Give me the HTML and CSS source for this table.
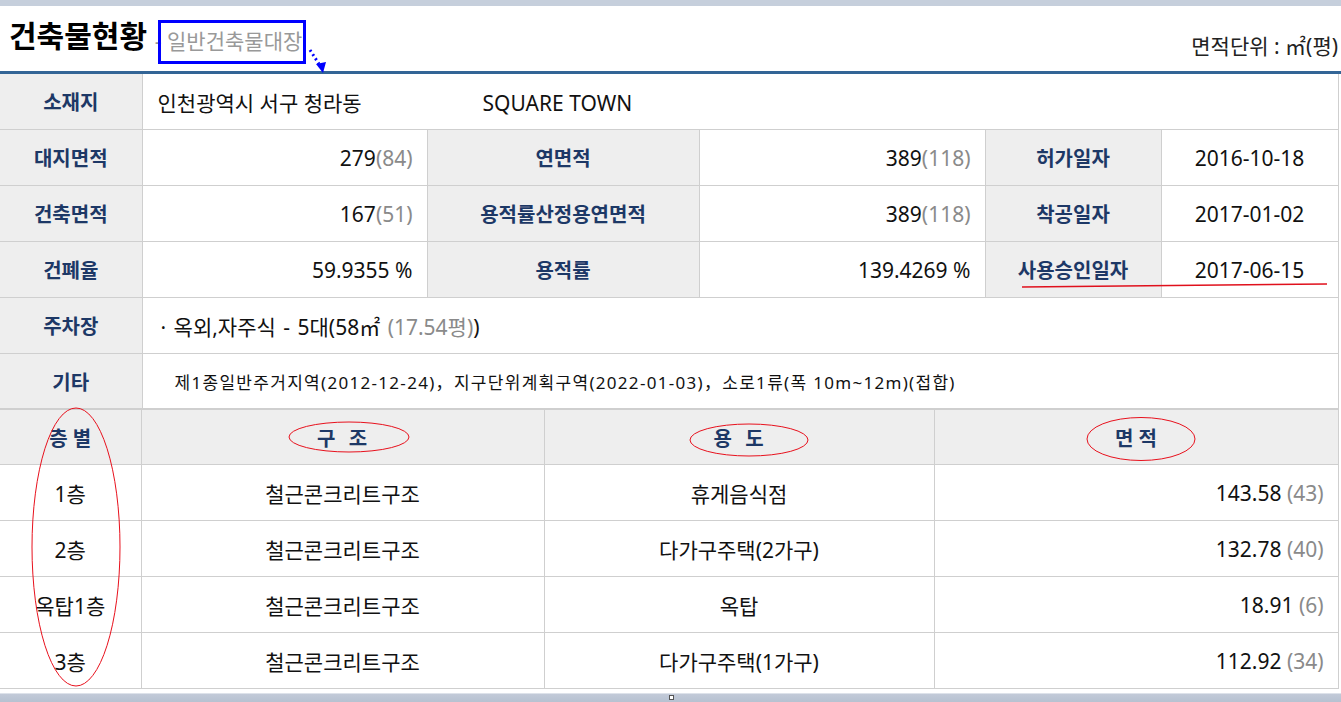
FILE: index.html
```html
<!DOCTYPE html>
<html>
<head>
    <title>건축물현황</title>
    <link rel="stylesheet" href="styles.css">
</head>
<body>
<div class="page">
    <div class="top-band"></div>

    <div class="head">
        <h1>건축물현황 <span class="sub">- 일반건축물대장</span></h1>
        <div class="unit">면적단위 : ㎡(평)</div>
    </div>

    <table class="info">
        <colgroup>
            <col class="c1"><col class="c2"><col class="c3"><col class="c4"><col class="c5"><col class="c6">
        </colgroup>
        <tr>
            <th>소재지</th>
            <td colspan="5" class="left"><span class="addr">인천광역시 서구 청라동</span>SQUARE TOWN</td>
        </tr>
        <tr>
            <th>대지면적</th>
            <td class="num">279<span class="py">(84)</span></td>
            <th>연면적</th>
            <td class="num">389<span class="py">(118)</span></td>
            <th>허가일자</th>
            <td class="date">2016-10-18</td>
        </tr>
        <tr>
            <th>건축면적</th>
            <td class="num">167<span class="py">(51)</span></td>
            <th>용적률산정용연면적</th>
            <td class="num">389<span class="py">(118)</span></td>
            <th>착공일자</th>
            <td class="date">2017-01-02</td>
        </tr>
        <tr>
            <th>건폐율</th>
            <td class="num">59.9355 %</td>
            <th>용적률</th>
            <td class="num">139.4269 %</td>
            <th>사용승인일자</th>
            <td class="date">2017-06-15</td>
        </tr>
        <tr>
            <th>주차장</th>
            <td colspan="5" class="left park">· 옥외,자주식 - 5대(58㎡ <span class="py">(17.54평)</span>)</td>
        </tr>
        <tr class="short">
            <th>기타</th>
            <td colspan="5" class="left etc">제1종일반주거지역(2012-12-24)，지구단위계획구역(2022-01-03)，소로1류(폭 10m~12m)(접합)</td>
        </tr>
    </table>

    <table class="floors">
        <colgroup>
            <col class="f1"><col class="f2"><col class="f3"><col class="f4">
        </colgroup>
        <tr class="short">
            <th>층 별</th>
            <th class="wide">구&nbsp; 조</th>
            <th class="wide">용&nbsp; 도</th>
            <th>면 적</th>
        </tr>
        <tr><td>1층</td><td>철근콘크리트구조</td><td>휴게음식점</td><td class="num">143.58 <span class="py">(43)</span></td></tr>
        <tr><td>2층</td><td>철근콘크리트구조</td><td>다가구주택(2가구)</td><td class="num">132.78 <span class="py">(40)</span></td></tr>
        <tr><td>옥탑1층</td><td>철근콘크리트구조</td><td>옥탑</td><td class="num">18.91 <span class="py">(6)</span></td></tr>
        <tr><td>3층</td><td>철근콘크리트구조</td><td>다가구주택(1가구)</td><td class="num">112.92 <span class="py">(34)</span></td></tr>
    </table>

    <div class="bottom-band"><span class="grip"></span></div>

    <!-- hand-drawn annotations over the page -->
    <svg class="marks" width="1341" height="702" viewBox="0 0 1341 702">
        <rect x="159.5" y="21.5" width="145" height="41" fill="none" stroke="#0000ff" stroke-width="3"/>
        <line x1="310" y1="50" x2="319" y2="64" stroke="#0000ff" stroke-width="3" stroke-dasharray="2 3"/>
        <polygon points="316,64 326,62 323,73" fill="#0000ff"/>
        <line x1="1022" y1="287" x2="1327" y2="284" stroke="#e0101c" stroke-width="1.6"/>
        <g fill="none" stroke="#e8101c" stroke-width="1">
            <ellipse cx="349" cy="437" rx="60" ry="15"/>
            <ellipse cx="749" cy="440" rx="59" ry="16"/>
            <ellipse cx="1141" cy="439" rx="54" ry="21.5"/>
            <ellipse cx="76" cy="547" rx="44" ry="139"/>
        </g>
    </svg>
</div>
</body>
</html>
```

FILE: styles.css
```css
body {
    margin: 0;
    font-family: "Noto Sans", "Noto Sans CJK KR", sans-serif;
    color: #111;
    background: #fff;
}

.page {
    position: relative;
    width: 1341px;
    height: 702px;
    overflow: hidden;
}

.top-band {
    height: 6px;
    background: #c6cfdc;
}

.head {
    display: flex;
    justify-content: space-between;
    align-items: flex-end;
    height: 65px;
    padding: 0 3px 0 9px;
    border-bottom: 3px solid #336596;
}

h1 {
    margin: 0 0 10px 0;
    font-size: 30px;
    font-weight: bold;
    color: #000;
    line-height: 40px;
}

h1 .sub {
    font-size: 21px;
    font-weight: normal;
    color: #999;
    vertical-align: -2px;
}

.unit {
    font-size: 21px;
    line-height: 28px;
    color: #222;
    margin-bottom: 11px;
}

table {
    width: 1338px;
    border-collapse: collapse;
    table-layout: fixed;
    font-size: 21px;
}

th, td {
    border: 1px solid #cfcfcf;
    height: 55px;
    padding: 0 14px;
    white-space: nowrap;
}

tr.short th, tr.short td {
    height: 54px;
}

table tr:first-child th,
table tr:first-child td {
    border-top: none;
}

th:first-child, td:first-child {
    border-left: none;
}

th {
    background: #eeeeee;
    color: #1d3866;
    font-weight: bold;
    font-size: 20px;
    text-align: center;
}

td {
    text-align: center;
}

.info .c1 { width: 142px; }
.info .c2 { width: 285px; }
.info .c3 { width: 272px; }
.info .c4 { width: 286px; }
.info .c5 { width: 176px; }
.info .c6 { width: 177px; }

.floors .f1 { width: 141px; }
.floors .f2 { width: 403px; }
.floors .f3 { width: 390px; }
.floors .f4 { width: 404px; }

.floors tr:first-child th {
    border-top: 1px solid #cfcfcf;
}

.floors th.wide {
    letter-spacing: 1px;
}

td.left {
    text-align: left;
    padding-left: 15px;
}

td.num {
    text-align: right;
}

.addr {
    display: inline-block;
    width: 325px;
}

td.park {
    padding-left: 18px;
    word-spacing: 2px;
}

td.etc {
    font-size: 17px;
    padding-left: 32px;
    letter-spacing: 1.3px;
}

.py {
    color: #8a8a8a;
}

.bottom-band {
    position: relative;
    margin-top: 4px;
    height: 10px;
    background: linear-gradient(#c2cad8, #b4bfcf);
    border-top: 1px solid #dde2ea;
}

.grip {
    position: absolute;
    left: 669px;
    top: 1px;
    width: 3px;
    height: 3px;
    border: 1px solid #555;
    background: #fff;
}

.marks {
    position: absolute;
    left: 0;
    top: 0;
    pointer-events: none;
}
```
